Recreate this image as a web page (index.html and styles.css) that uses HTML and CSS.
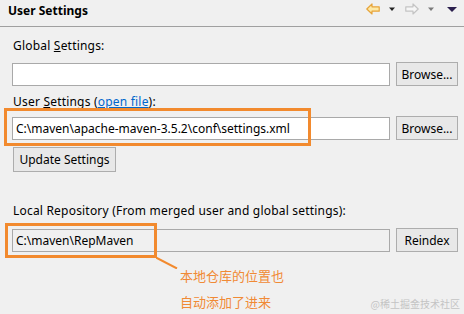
FILE: index.html
```html
<!DOCTYPE html>
<html>
<head>
<meta charset="utf-8">
<link rel="stylesheet" href="styles.css">
</head>
<body>
<div class="page">
  <header class="head">
    <h1 class="title">User Settings</h1>
    <div class="tools">
      <svg class="ico back" width="14" height="12" viewBox="0 0 14 12"><path d="M0.8 6 L6 1 L6 3.8 L13.2 3.8 L13.2 8.2 L6 8.2 L6 11 Z" fill="#fde9a6" stroke="#e7a43a" stroke-width="1.2" stroke-linejoin="round"/></svg>
      <svg class="tri t1" width="8" height="6" viewBox="0 0 8 6"><path d="M1 1.5 L7 1.5 L4 5 Z" fill="#222"/></svg>
      <svg class="ico fwd" width="14" height="12" viewBox="0 0 14 12"><path d="M13.2 6 L8 1 L8 3.8 L0.8 3.8 L0.8 8.2 L8 8.2 L8 11 Z" fill="#f6f6f6" stroke="#c4c4c4" stroke-width="1.2" stroke-linejoin="round"/></svg>
      <svg class="tri t2" width="8" height="6" viewBox="0 0 8 6"><path d="M1 1.5 L7 1.5 L4 5 Z" fill="#7a7a7a"/></svg>
      <svg class="tri big" width="12" height="7" viewBox="0 0 12 7"><path d="M1 1 L11 1 L6 6 Z" fill="#2a1f4d"/></svg>
    </div>
  </header>

  <main class="body">
    <div class="label">Global <u>S</u>ettings:</div>
    <div class="row">
      <div class="field"></div>
      <button class="btn">Browse...</button>
    </div>

    <div class="label l2">User <u>S</u>ettings (<a class="link">open file</a>):</div>
    <div class="row r2">
      <div class="field">C:\maven\apache-maven-3.5.2\conf\settings.xml</div>
      <button class="btn">Browse...</button>
      <span class="mark m1"></span>
    </div>
    <button class="btn upd">Update Settings</button>

    <div class="label l3">Local Repository (From merged user and global settings):</div>
    <div class="row r3">
      <div class="field ro">C:\maven\RepMaven</div>
      <button class="btn">Reindex</button>
      <span class="mark m2"></span>
      <svg class="leader" width="22" height="12" viewBox="0 0 22 12"><path d="M0 0.5 L21 11.5" stroke="#f28a2e" stroke-width="2"/></svg>
      <div class="note">本地仓库的位置也<br>自动添加了进来</div>
    </div>
  </main>
  <div class="wm">@稀土掘金技术社区</div>
</div>
</body>
</html>
```
FILE: styles.css
```css
* { box-sizing: border-box; }
html, body { margin: 0; padding: 0; }
body {
  width: 464px;
  height: 314px;
  overflow: hidden;
  background: #f0f0f0;
  font-family: "Noto Sans", "Noto Sans CJK SC", sans-serif;
  font-size: 12px;
  color: #000;
}
.page { position: relative; height: 314px; }
.head {
  height: 27px;
  border-bottom: 1px solid #a0a0a0;
  display: flex;
  align-items: flex-start;
  justify-content: space-between;
  padding: 0 6px 0 8px;
}
.title {
  margin: 0;
  font-size: 12px;
  font-weight: bold;
  line-height: 18px;
  padding-top: 2px;
}
.tools {
  display: flex;
  align-items: center;
  padding-top: 2px;
  height: 16px;
}
.tools .t1 { margin-left: 8px; }
.tools .fwd { margin-left: 9px; }
.tools .t2 { margin-left: 8px; }
.tools .big { margin-left: 11px; }

.body { padding: 0 6px 0 12px; }
.label {
  line-height: 16px;
  margin-top: 11px;
  padding-left: 1px;
  white-space: nowrap;
  letter-spacing: 0.2px;
}
.l2 { margin-top: 8px; }
.l3 { margin-top: 31px; }
.link { color: #0066cc; text-decoration: underline; }
.row {
  position: relative;
  display: grid;
  grid-template-columns: 1fr 62px;
  column-gap: 6px;
  align-items: center;
  margin-top: 8px;
}
.r2 { margin-top: 6px; }
.r3 { margin-top: 9px; }
.field {
  height: 23px;
  background: #fff;
  border: 1px solid #a9a9a9;
  padding: 0 3px;
  line-height: 21px;
  white-space: nowrap;
  overflow: hidden;
}
.field.ro { background: #f0f0f0; }
.btn {
  height: 24px;
  font: inherit;
  background: #e8e8e8;
  border: 1px solid #adadad;
  padding: 0 4px;
  color: #000;
  border-radius: 0;
}
.upd { margin-top: 7px; width: 103px; height: 25px; display: block; margin-left: 1px; }

.mark {
  position: absolute;
  border: 3px solid #f28a2e;
  pointer-events: none;
}
.m1 { left: -8px; top: -8px; width: 307px; height: 38px; }
.m2 { left: -7px; top: -5px; width: 152px; height: 35px; }
.leader { position: absolute; left: 144px; top: 29px; }
.note {
  position: absolute;
  left: 168px;
  top: 35px;
  color: #f08a35;
  font-size: 13px;
  line-height: 26px;
  font-family: "Noto Sans CJK SC", sans-serif;
  white-space: nowrap;
}
.wm {
  position: absolute;
  right: 4px;
  bottom: 3px;
  font-size: 10px;
  color: #c4c4c4;
  font-family: "Noto Sans CJK SC", sans-serif;
}
```
